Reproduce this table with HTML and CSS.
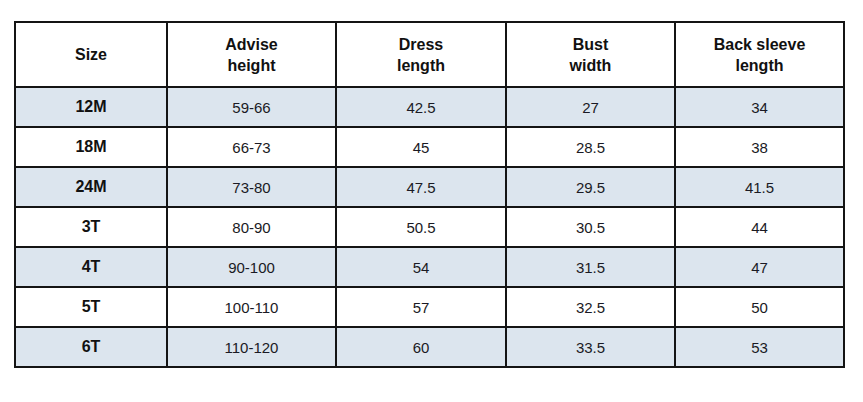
FILE: index.html
```html
<!DOCTYPE html>
<html>
<head>
<meta charset="utf-8">
<link rel="stylesheet" href="styles.css">
</head>
<body>
<table class="size-table">
  <colgroup>
    <col class="c1"><col class="c2"><col class="c3"><col class="c4"><col class="c5">
  </colgroup>
  <thead>
    <tr>
      <th>Size</th>
      <th>Advise<br>height</th>
      <th>Dress<br>length</th>
      <th>Bust<br>width</th>
      <th>Back sleeve<br>length</th>
    </tr>
  </thead>
  <tbody>
    <tr class="shade"><th>12M</th><td>59-66</td><td>42.5</td><td>27</td><td>34</td></tr>
    <tr><th>18M</th><td>66-73</td><td>45</td><td>28.5</td><td>38</td></tr>
    <tr class="shade"><th>24M</th><td>73-80</td><td>47.5</td><td>29.5</td><td>41.5</td></tr>
    <tr><th>3T</th><td>80-90</td><td>50.5</td><td>30.5</td><td>44</td></tr>
    <tr class="shade"><th>4T</th><td>90-100</td><td>54</td><td>31.5</td><td>47</td></tr>
    <tr><th>5T</th><td>100-110</td><td>57</td><td>32.5</td><td>50</td></tr>
    <tr class="shade"><th>6T</th><td>110-120</td><td>60</td><td>33.5</td><td>53</td></tr>
  </tbody>
</table>
</body>
</html>
```
FILE: styles.css
```css
html, body {
  margin: 0;
  background: #ffffff;
}
body {
  padding: 21px 0 0 14px;
  font-family: "Liberation Sans", Arial, sans-serif;
  color: #111;
}
.size-table {
  border-collapse: collapse;
  table-layout: fixed;
  width: 831px;
}
.c1 { width: 152px; }
.c2 { width: 169px; }
.c3 { width: 170px; }
.c4 { width: 169px; }
.c5 { width: 169px; }
.size-table th,
.size-table td {
  border: 2px solid #141414;
  text-align: center;
  vertical-align: middle;
  padding: 0;
}
.size-table thead th {
  height: 63px;
  font-size: 16px;
  font-weight: bold;
  line-height: 21px;
}
.size-table tbody th,
.size-table tbody td {
  height: 38px;
}
.size-table tbody th {
  font-size: 16px;
  font-weight: bold;
}
.size-table tbody td {
  font-size: 15px;
  font-weight: normal;
  color: #1a1a24;
}
.shade th,
.shade td {
  background: #dce5ee;
}
```
